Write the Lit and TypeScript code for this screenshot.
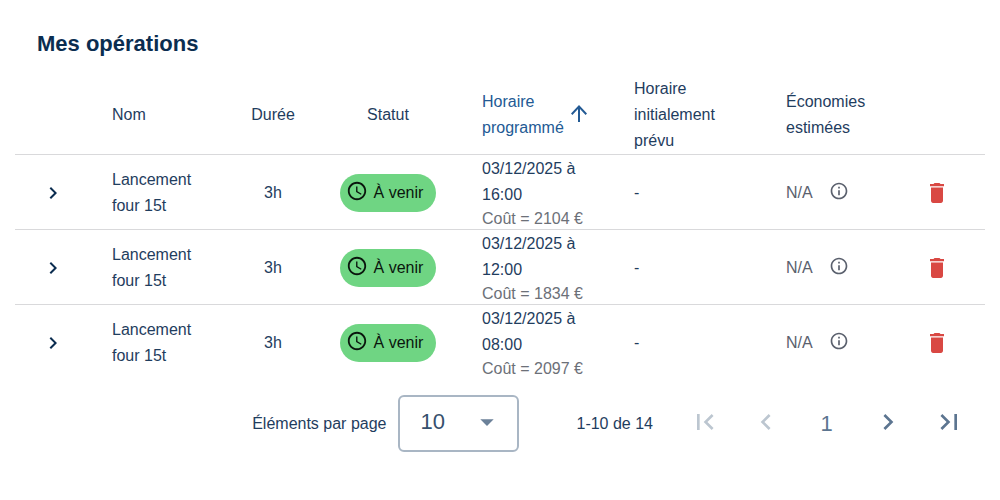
import { LitElement, html, css, svg } from "lit";
import { customElement, state } from "lit/decorators.js";

interface Operation {
  name: string;
  duration: string;
  status: string;
  date: string;
  cost: string;
  initial: string;
  savings: string;
}

const operations: Operation[] = ["16:00|2104", "12:00|1834", "08:00|2097"].map((entry) => {
  const [time, cost] = entry.split("|");
  return {
    name: "Lancement four 15t",
    duration: "3h",
    status: "À venir",
    date: `03/12/2025 à ${time}`,
    cost: `Coût = ${cost} €`,
    initial: "-",
    savings: "N/A",
  };
});

const paths = {
  right: "M10 6 8.59 7.41 13.17 12l-4.58 4.59L10 18l6-6z",
  left: "M15.41 7.41 14 6l-6 6 6 6 1.41-1.41L10.83 12z",
  first: "M18.41 16.59 13.82 12l4.59-4.59L17 6l-6 6 6 6zM6 6h2v12H6z",
  last: "M5.59 7.41 10.18 12l-4.59 4.59L7 18l6-6-6-6zM16 6h2v12h-2z",
  up: "M4 12l1.41 1.41L11 7.83V20h2V7.83l5.58 5.59L20 12l-8-8z",
  clock:
    "M11.99 2C6.47 2 2 6.48 2 12s4.47 10 9.99 10C17.52 22 22 17.52 22 12S17.52 2 11.99 2zM12 20c-4.42 0-8-3.58-8-8s3.58-8 8-8 8 3.58 8 8-3.58 8-8 8zm.5-13H11v6l5.25 3.15.75-1.23-4.5-2.67z",
  info: "M11 7h2v2h-2zm0 4h2v6h-2zm1-9C6.48 2 2 6.48 2 12s4.48 10 10 10 10-4.48 10-10S17.52 2 12 2zm0 18c-4.41 0-8-3.59-8-8s3.59-8 8-8 8 3.59 8 8-3.59 8-8 8z",
  trash: "M6 19c0 1.1.9 2 2 2h8c1.1 0 2-.9 2-2V7H6v12zM19 4h-3.5l-1-1h-5l-1 1H5v2h14V4z",
  down: "M7 10l5 5 5-5z",
};

const icon = (d: string, cls = "", box = "0 0 24 24") => html`
  <svg class="icon ${cls}" viewBox=${box} preserveAspectRatio="none" aria-hidden="true">
    ${svg`<path d=${d}></path>`}
  </svg>
`;

@customElement("app-root")
export class AppRoot extends LitElement {
  static styles = css`
    :host {
      display: block;
      background: #fff;
      color: #1f3d5e;
      font-family: "Liberation Sans", Arial, Helvetica, sans-serif;
      font-size: 16px;
      line-height: 26px;
    }
    main { padding: 30px 15px 0; }
    h1 {
      margin: 0 0 18px;
      padding: 0 22px;
      font-size: 22px;
      line-height: 28px;
      font-weight: 700;
      color: #0b2d50;
    }
    button {
      display: inline-flex;
      align-items: center;
      justify-content: center;
      padding: 0;
      border: 0;
      background: none;
      color: inherit;
      font: inherit;
      cursor: pointer;
    }
    button:disabled { cursor: default; }
    .icon {
      display: block;
      flex: none;
      width: 24px;
      height: 24px;
      fill: currentColor;
    }
    table {
      width: 100%;
      table-layout: fixed;
      border-collapse: separate;
      border-spacing: 0;
    }
    .c-toggle { width: 75px; }
    .c-name { width: 140px; }
    .c-duration { width: 86px; }
    .c-status { width: 144px; }
    .c-time { width: 152px; }
    .c-savings { width: 125px; }
    .c-action { width: 96px; }
    th, td {
      padding: 0 22px;
      text-align: left;
      vertical-align: middle;
      font-weight: 400;
      border-bottom: 1px solid #d9d9db;
    }
    td { padding-top: 1px; }
    tbody tr:last-child td { border-bottom: 0; }
    .center { padding-left: 0; padding-right: 0; text-align: center; }
    .sort {
      gap: 7px;
      justify-content: flex-start;
      text-align: left;
      color: #235a94;
    }
    .sort span { width: min-content; }
    .sort .icon, .pill .icon, .savings .icon, .page .icon { margin-bottom: 3px; }
    .icon.arrow { width: 16px; height: 17px; }
    .toggle, .delete {
      vertical-align: middle;
      width: 32px;
      height: 32px;
    }
    .toggle { color: #0b2d50; }
    .delete { color: #d94843; }
    .icon.trash { width: 14px; height: 20px; }
    .pill {
      display: inline-flex;
      align-items: center;
      gap: 6px;
      height: 38px;
      padding: 0 13px 0 6px;
      border-radius: 19px;
      background: #6fd583;
      color: #0a150d;
      vertical-align: middle;
    }
    .icon.clock { width: 22px; height: 22px; }
    .cost { display: block; color: #6c7078; line-height: 21px; white-space: nowrap; }
    .savings {
      display: flex;
      align-items: center;
      gap: 16px;
      color: #5a606d;
    }
    .icon.info { width: 20px; height: 20px; }
    .pager {
      display: flex;
      flex-wrap: wrap;
      align-items: center;
      justify-content: flex-end;
      padding: 16px 14px 16px 0;
    }
    .select {
      display: grid;
      align-items: center;
      margin: 0 57px 0 12px;
    }
    .select > * { grid-area: 1 / 1; }
    .select .icon {
      justify-self: end;
      width: 32px;
      height: 32px;
      margin: 0 16px 3px 0;
      color: #6b8199;
      pointer-events: none;
    }
    select {
      appearance: none;
      width: 121px;
      height: 57px;
      padding: 0 20px 3px;
      border: 2px solid #a9b6c4;
      border-radius: 6px;
      background: #fff;
      color: #36506d;
      font: inherit;
      font-size: 22px;
    }
    nav {
      display: flex;
      align-items: center;
      gap: 16px;
      margin-left: 29px;
      color: #5c7590;
    }
    .page {
      width: 45px;
      height: 45px;
      font-size: 22px;
    }
    .page:disabled { color: #bcc6d0; }
    .page .icon { width: 32px; height: 32px; }
  `;

  @state() private size = "10";

  private row(op: Operation) {
    return html`
      <tr>
        <td class="center"><button class="toggle" aria-label="Afficher le détail">${icon(paths.right)}</button></td>
        <td>${op.name}</td>
        <td class="center">${op.duration}</td>
        <td class="center"><span class="pill">${icon(paths.clock, "clock")}${op.status}</span></td>
        <td>${op.date}<span class="cost">${op.cost}</span></td>
        <td>${op.initial}</td>
        <td><div class="savings">${op.savings}${icon(paths.info, "info")}</div></td>
        <td class="center">
          <button class="delete" aria-label="Supprimer">${icon(paths.trash, "trash", "5 3 14 18")}</button>
        </td>
      </tr>
    `;
  }

  render() {
    return html`
      <main>
        <h1>Mes opérations</h1>
        <table>
          <colgroup>
            <col class="c-toggle" /><col class="c-name" /><col class="c-duration" /><col class="c-status" />
            <col class="c-time" /><col class="c-time" /><col class="c-savings" /><col class="c-action" />
          </colgroup>
          <thead>
            <tr>
              <th></th>
              <th scope="col">Nom</th>
              <th scope="col" class="center">Durée</th>
              <th scope="col" class="center">Statut</th>
              <th scope="col" aria-sort="ascending">
                <button class="sort"><span>Horaire programmé</span>${icon(paths.up, "arrow", "4 4 16 16")}</button>
              </th>
              <th scope="col">Horaire initialement prévu</th>
              <th scope="col">Économies estimées</th>
              <th></th>
            </tr>
          </thead>
          <tbody>${operations.map((op) => this.row(op))}</tbody>
        </table>
        <div class="pager">
          <label for="size">Éléments par page</label>
          <div class="select">
            <select
              id="size"
              .value=${this.size}
              @change=${(e: Event) => (this.size = (e.target as HTMLSelectElement).value)}
            >
              <option>10</option>
              <option>25</option>
              <option>50</option>
            </select>
            ${icon(paths.down)}
          </div>
          <span>1-10 de 14</span>
          <nav aria-label="Pagination">
            <button class="page" disabled aria-label="Première page">${icon(paths.first)}</button>
            <button class="page" disabled aria-label="Page précédente">${icon(paths.left)}</button>
            <button class="page" aria-current="page">1</button>
            <button class="page" aria-label="Page suivante">${icon(paths.right)}</button>
            <button class="page" aria-label="Dernière page">${icon(paths.last)}</button>
          </nav>
        </div>
      </main>
    `;
  }
}
